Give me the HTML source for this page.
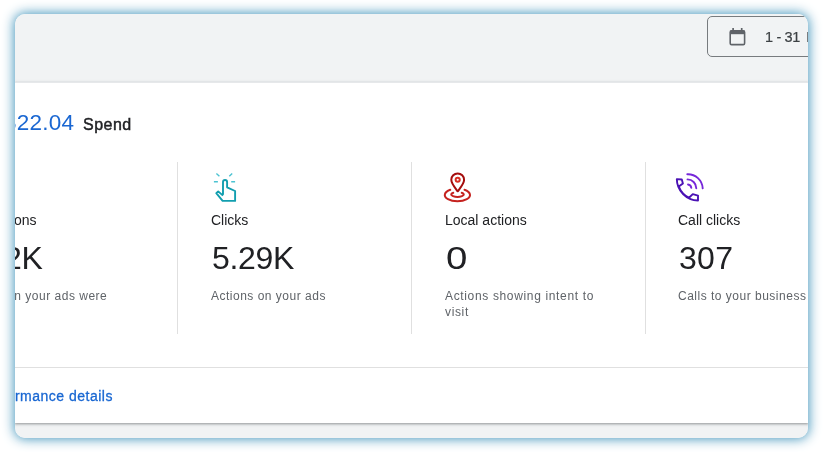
<!DOCTYPE html>
<html lang="en">
<head>
<meta charset="utf-8">
<title>Performance summary</title>
<style>
html,body{margin:0;padding:0;background:#fff;}
body{width:823px;height:452px;position:relative;overflow:hidden;font-family:"Liberation Sans",sans-serif;}
#card{position:absolute;left:15px;top:14px;width:793px;height:424px;border-radius:10.5px;background:#f1f3f4;overflow:hidden;}
#glow{position:absolute;left:15px;top:14px;width:793px;height:424px;border-radius:10.5px;box-shadow:0 0 12px 1px rgba(60,145,185,.95);}
#white{position:absolute;left:0;top:68px;width:793px;height:340px;background:#fff;border-top:1px solid #e6e8ea;box-shadow:0 1px 2px rgba(60,64,67,.4),0 1px 3px 1px rgba(60,64,67,.12);}
.abs{position:absolute;white-space:nowrap;will-change:transform;}
#btn span{will-change:transform;}
#btn{position:absolute;left:692px;top:2px;width:140px;height:39px;border:1px solid #777b7e;border-radius:5px;}
#btn svg{position:absolute;left:20px;top:10px;}
#btn span{position:absolute;left:57px;top:12px;-webkit-text-stroke:.2px #3c4043;letter-spacing:-.35px;font-size:14.5px;color:#3c4043;line-height:16px;white-space:nowrap;}
#amt{right:733.5px;top:96px;letter-spacing:.22px;font-size:22.5px;line-height:26px;color:#1a67d2;}
#spend{left:68px;top:101px;font-size:16px;line-height:20px;color:#202124;letter-spacing:.5px;-webkit-text-stroke:.45px #202124;}
.vd{position:absolute;top:148px;width:1px;height:172px;background:#e0e0e0;}
.lab{font-size:14px;line-height:18px;color:#202124;top:197px;}
.num{letter-spacing:-.3px;font-size:32px;line-height:36px;color:#202124;top:226px;}
.desc{font-size:12px;line-height:16px;color:#5f6368;top:274px;letter-spacing:.5px;}
.ic{position:absolute;}
#hl{position:absolute;left:0;top:353px;width:793px;height:1px;background:#e0e0e0;}
#link{right:695px;top:373px;font-size:14px;line-height:18px;color:#1967d2;letter-spacing:.5px;-webkit-text-stroke:.3px #1967d2;}
</style>
</head>
<body>
<div id="glow"></div>
<div id="card">
  <div id="btn">
    <svg width="18" height="20" viewBox="0 0 18 20"><path d="M5.1 1.1v3M13.7 1.1v3" stroke="#5f6368" stroke-width="1.7" fill="none"/><rect x="2.2" y="3.8" width="14.4" height="13.8" rx="1.4" fill="none" stroke="#5f6368" stroke-width="1.6"/><rect x="2" y="3.6" width="14.8" height="3.6" fill="#5f6368"/></svg>
    <span>1 - 31 <i style="font-style:normal;margin-left:2.7px">May 2023</i></span>
  </div>
  <div id="white"></div>
  <div id="amt" class="abs"><span style="margin-right:.15px">$1,3</span>22.04</div>
  <div id="spend" class="abs">Spend</div>

  <div class="vd" style="left:162px"></div>
  <div class="vd" style="left:396px"></div>
  <div class="vd" style="left:630px"></div>

  <div class="abs lab" style="right:771.5px"><span style="margin-right:3px">Impressi</span>ons</div>
  <div class="abs num" style="right:765.4px">182K</div>
  <div class="abs desc" style="right:701.2px">How often your ads were</div>

  <div class="abs lab" style="left:196px">Clicks</div>
  <div class="abs num" style="left:197px">5.29K</div>
  <div class="abs desc" style="left:196px">Actions on your ads</div>

  <div class="abs lab" style="left:430px">Local actions</div>
  <div class="abs num" style="left:430.5px;transform:scaleX(1.2);transform-origin:0 0">0</div>
  <div class="abs desc" style="left:430px;letter-spacing:.65px">Actions showing intent to<br>visit</div>

  <div class="abs lab" style="left:663px">Call clicks</div>
  <div class="abs num" style="left:663.5px;letter-spacing:.3px">307</div>
  <div class="abs desc" style="left:663px">Calls to your business</div>


  <svg class="ic" style="left:195px;top:151px" width="34" height="45" viewBox="210 165 34 45" fill="none">
    <g stroke="#4cc3d2" stroke-width="1.4" stroke-linecap="butt">
      <path d="M216.4 173.4L219.4 176.2M232.2 173.4L229.3 176.3M213.9 181.8H217.9M231.2 181.8H235.1"/>
    </g>
    <path d="M223 194.8V182a2.05 2.05 0 0 1 4.1 0V187.3L235.1 191V200.9H222.6L216.3 193.2L218.2 191.4L223 195.6" stroke="#129eaf" stroke-width="1.9" stroke-linejoin="round"/>
  </svg>
  <svg class="ic" style="left:425px;top:151px" width="40" height="45" viewBox="440 165 40 45" fill="none">
    <path d="M450.3 189.8A12.6 6.3 0 1 0 464.5 189.8" stroke="#c5221f" stroke-width="2" stroke-linecap="round"/>
    <path d="M453.3 192.7A6.3 2.4 0 1 0 461.7 192.7" stroke="#c5221f" stroke-width="2" stroke-linecap="round"/>
    <path d="M457.7 191.3C454 186.5 451.3 183.5 451.3 179.8a6.4 6.4 0 0 1 12.8 0C464.1 183.5 461.4 186.5 457.7 191.3Z" stroke="#a50e0e" stroke-width="2" stroke-linejoin="round"/>
    <circle cx="457.7" cy="179.8" r="2.05" stroke="#d93025" stroke-width="2"/>
  </svg>
  <svg class="ic" style="left:655px;top:151px" width="40" height="45" viewBox="670 165 40 45" fill="none">
    <g stroke="#7627d9" stroke-width="1.9" stroke-linecap="round">
      <path d="M687.3 174.2A14.8 14.8 0 0 1 702.7 188.4"/>
      <path d="M687.5 179.4A9 9 0 0 1 696.3 188.2"/>
      <path d="M688 184.5A4 4 0 0 1 691.3 187.9"/>
    </g>
    <path d="M676.8 179.1L681.8 179.5L682.9 183.4L678.8 186.6A21.1 21.1 0 0 0 689 197.8L692.8 194.1L698 195.6V200.5A21.6 21.6 0 0 1 676.8 179.1Z" stroke="#4a12b4" stroke-width="1.9" stroke-linejoin="round"/>
  </svg>
  <div id="hl"></div>
  <div id="link" class="abs"><span style="margin-right:4px">View perfo</span>rmance details</div>
</div>
</body>
</html>
